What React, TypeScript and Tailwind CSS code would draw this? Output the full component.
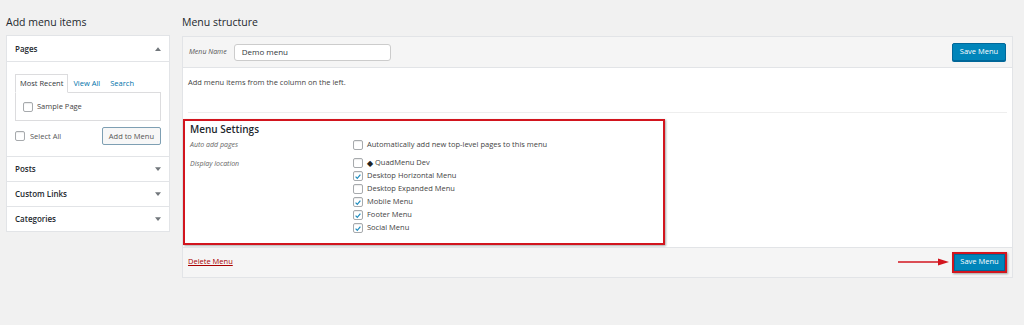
import React from "react";

const locations: { label: string; checked: boolean; icon?: boolean }[] = [
  { label: "QuadMenu Dev", checked: false, icon: true },
  { label: "Desktop Horizontal Menu", checked: true },
  { label: "Desktop Expanded Menu", checked: false },
  { label: "Mobile Menu", checked: true },
  { label: "Footer Menu", checked: true },
  { label: "Social Menu", checked: true },
];

function Box({ checked = false }: { checked?: boolean }) {
  return (
    <span className="inline-flex h-[10px] w-[10px] shrink-0 items-center justify-center rounded-[2px] border border-[#a7aaad] bg-white shadow-[inset_0_1px_1px_rgba(0,0,0,0.08)]">
      {checked && (
        <svg viewBox="0 0 10 10" className="h-[9px] w-[9px]">
          <path d="M2 5.2 L4.1 7.4 L8 2.6" fill="none" stroke="#1e8cbe" strokeWidth="1.5" />
        </svg>
      )}
    </span>
  );
}

function Caret({ up = false }: { up?: boolean }) {
  return (
    <svg viewBox="0 0 8 5" className="h-[4px] w-[6px]">
      <path d={up ? "M0 5 L4 0 L8 5 Z" : "M0 0 L8 0 L4 5 Z"} fill="#72777c" />
    </svg>
  );
}

export default function App() {
  return (
    <div className="flex h-[325px] w-[1024px] gap-[12px] overflow-hidden bg-[#f1f1f1] pl-[6px] pt-[14px] font-['Open_Sans','Noto_Sans',sans-serif] text-[#23282d]">
      {/* ===== left: add menu items ===== */}
      <div className="w-[164px] shrink-0">
        <h2 className="h-[21px] text-[10.5px] leading-[16px]">Add menu items</h2>
        <div className="border border-[#e2e4e7] bg-white">
          <div className="flex h-[26px] items-center justify-between border-b border-[#e2e4e7] px-[8px] text-[8px] font-semibold">
            Pages
            <Caret up />
          </div>
          <div className="px-[8px] pb-[11px] pt-[12px]">
            <div className="flex items-end text-[7.5px]">
              <span className="relative -mb-px border border-b-white border-[#dcdcde] bg-white px-[4px] py-[3px] text-[#32373c]">
                Most Recent
              </span>
              <span className="px-[5px] py-[3px] text-[#0073aa]">View All</span>
              <span className="px-[5px] py-[3px] text-[#0073aa]">Search</span>
            </div>
            <div className="flex h-[29px] items-center gap-[4px] border border-[#dcdcde] px-[7px] text-[7.5px] text-[#444]">
              <Box />
              Sample Page
            </div>
            <div className="mt-[6px] flex items-center justify-between">
              <span className="flex items-center gap-[5px] text-[7.5px] text-[#555]">
                <Box />
                Select All
              </span>
              <button className="h-[18px] rounded-[2px] border border-[#7e9fb3] bg-[#f7f7f7] px-[6px] text-[7.5px] leading-none text-[#555]">
                Add to Menu
              </button>
            </div>
          </div>
          {["Posts", "Custom Links", "Categories"].map((s) => (
            <div
              key={s}
              className="flex h-[25px] items-center justify-between border-t border-[#e2e4e7] px-[8px] text-[8px] font-semibold"
            >
              {s}
              <Caret />
            </div>
          ))}
        </div>
      </div>

      {/* ===== right: menu structure ===== */}
      <div className="w-[831px] shrink-0">
        <h2 className="h-[22px] text-[10.5px] leading-[16px]">Menu structure</h2>
        <div className="border border-[#e2e4e7] bg-white">
          <div className="flex h-[31px] items-center justify-between border-b border-[#e2e4e7] bg-[#f5f5f5] px-[6px]">
            <div className="flex items-center gap-[7px]">
              <span className="text-[7px] italic text-[#555]">Menu Name</span>
              <div className="flex h-[17px] w-[157px] items-center rounded-[3px] border border-[#ccc] bg-white px-[7px] text-[8px] text-[#32373c]">
                Demo menu
              </div>
            </div>
            <button className="h-[18px] w-[54px] rounded-[2px] border border-[#006799] bg-[#0085ba] text-[7.5px] leading-none text-white shadow-[0_1px_0_#006799]">
              Save Menu
            </button>
          </div>

          <div className="pb-[2px] pt-[9px]">
            <p className="px-[5px] text-[7.5px] text-[#444]">Add menu items from the column on the left.</p>
            <div className="mx-[5px] mt-[24px] border-t border-[#eee]" />

            <div className="mt-[6px] w-[482px] border-2 border-[#d2151e] pb-[8px] pl-[5px] shadow-[1px_1px_2px_rgba(0,0,0,0.35)]">
              <h3 className="text-[10px] font-semibold leading-[16px]">Menu Settings</h3>
              <div className="mt-[2px] flex items-center">
                <span className="w-[163px] text-[7px] italic text-[#666]">Auto add pages</span>
                <span className="flex items-center gap-[4px] text-[7.5px] text-[#444]">
                  <Box />
                  Automatically add new top-level pages to this menu
                </span>
              </div>
              <div className="mt-[6px] flex">
                <span className="w-[163px] text-[7px] italic leading-[13px] text-[#666]">Display location</span>
                <div className="flex flex-col">
                  {locations.map((l) => (
                    <span key={l.label} className="flex h-[13px] items-center gap-[4px] text-[7.5px] text-[#444]">
                      <Box checked={l.checked} />
                      {l.icon && <span className="-mr-[2px] text-[8px] leading-none text-[#222]">◆</span>}
                      {l.label}
                    </span>
                  ))}
                </div>
              </div>
            </div>
          </div>

          <div className="flex h-[30px] items-center justify-between border-t border-[#e2e4e7] bg-[#f5f5f5] px-[5px]">
            <a className="text-[7.5px] text-[#a00] underline">Delete Menu</a>
            <div className="flex items-center gap-[2px]">
              <svg viewBox="0 0 52 10" className="h-[10px] w-[52px]">
                <path d="M0 5 L42 5" stroke="#d2151e" strokeWidth="1.6" />
                <path d="M40 1.5 L51 5 L40 8.5 Z" fill="#d2151e" />
              </svg>
              <div className="border-2 border-[#d2151e] shadow-[1px_1px_2px_rgba(0,0,0,0.35)]">
                <button className="block h-[17px] w-[51px] border border-[#006799] bg-[#0085ba] text-[7.5px] leading-none text-white">
                  Save Menu
                </button>
              </div>
            </div>
          </div>
        </div>
      </div>
    </div>
  );
}
